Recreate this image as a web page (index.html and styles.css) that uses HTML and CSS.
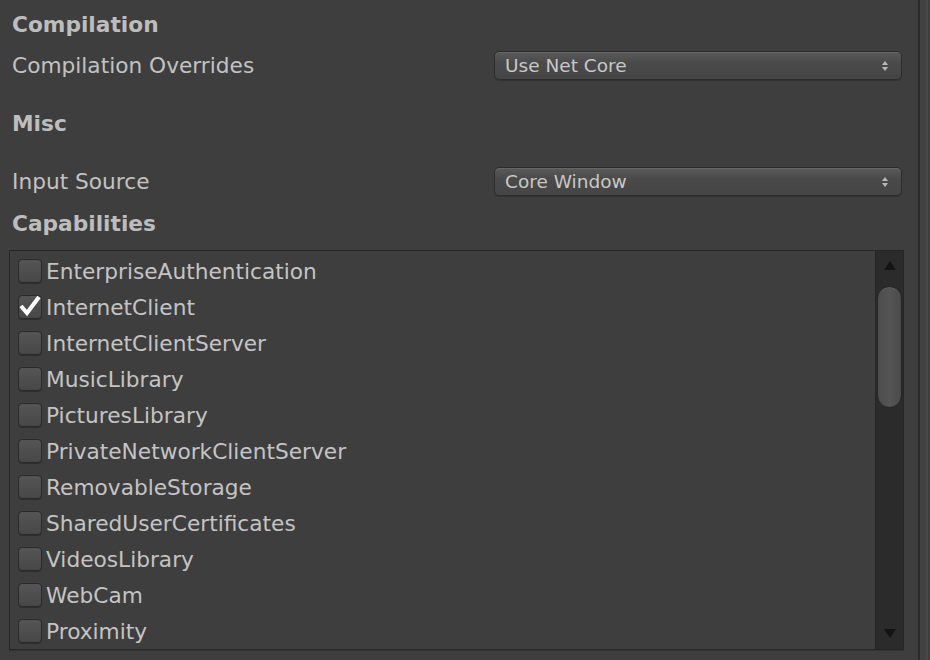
FILE: index.html
```html
<!DOCTYPE html>
<html>
<head>
<meta charset="utf-8">
<link rel="stylesheet" href="styles.css">
</head>
<body>
<div class="panel">
  <div class="content">
    <div class="heading h-compilation">Compilation</div>
    <div class="field f-overrides">
      <span class="label">Compilation Overrides</span>
      <div class="dropdown"><span>Use Net Core</span><svg class="updown" width="8" height="12" viewBox="0 0 8 12"><path d="M4 1 L7 5 L1 5 Z" fill="#b8b8b8"/><path d="M1 7 L7 7 L4 11 Z" fill="#b8b8b8"/></svg></div>
    </div>
    <div class="heading h-misc">Misc</div>
    <div class="field f-input">
      <span class="label">Input Source</span>
      <div class="dropdown"><span>Core Window</span><svg class="updown" width="8" height="12" viewBox="0 0 8 12"><path d="M4 1 L7 5 L1 5 Z" fill="#b8b8b8"/><path d="M1 7 L7 7 L4 11 Z" fill="#b8b8b8"/></svg></div>
    </div>
    <div class="heading h-cap">Capabilities</div>
    <div class="listbox">
      <div class="items">
        <div class="item"><span class="cb"></span><span>EnterpriseAuthentication</span></div>
        <div class="item"><span class="cb"><svg width="24" height="24" viewBox="0 0 24 24"><path d="M3 12 L9 19 L21 3" fill="none" stroke="#ffffff" stroke-width="4" stroke-linejoin="miter"/></svg></span><span>InternetClient</span></div>
        <div class="item"><span class="cb"></span><span>InternetClientServer</span></div>
        <div class="item"><span class="cb"></span><span>MusicLibrary</span></div>
        <div class="item"><span class="cb"></span><span>PicturesLibrary</span></div>
        <div class="item"><span class="cb"></span><span>PrivateNetworkClientServer</span></div>
        <div class="item"><span class="cb"></span><span>RemovableStorage</span></div>
        <div class="item"><span class="cb"></span><span>SharedUserCertificates</span></div>
        <div class="item"><span class="cb"></span><span>VideosLibrary</span></div>
        <div class="item"><span class="cb"></span><span>WebCam</span></div>
        <div class="item"><span class="cb"></span><span>Proximity</span></div>
      </div>
      <div class="scrollbar">
        <svg class="arrow" width="14" height="12" viewBox="0 0 14 12"><path d="M7 1 L13 10 L1 10 Z" fill="#141414"/></svg>
        <div class="track"><div class="thumb"></div></div>
        <svg class="arrow" width="14" height="12" viewBox="0 0 14 12"><path d="M1 2 L13 2 L7 11 Z" fill="#141414"/></svg>
      </div>
    </div>
  </div>
  <div class="edge"><div class="edge-dark"></div><div class="edge-mid"></div><div class="edge-light"></div><div class="edge-end"></div></div>
</div>
</body>
</html>
```
FILE: styles.css
```css
html, body {
  margin: 0;
  padding: 0;
  background: #3e3e3e;
}
body {
  width: 930px;
  height: 660px;
  overflow: hidden;
  font-family: "DejaVu Sans", Verdana, sans-serif;
  color: #c2c2c2;
}
.panel {
  display: flex;
  height: 660px;
}
.content {
  flex: 1;
  padding: 0 0 0 9px;
  display: flex;
  flex-direction: column;
}
.heading {
  font-weight: bold;
  font-size: 21.7px;
  color: #bdbdbd;
  padding-left: 3px;
  line-height: 24px;
  height: 24px;
}
.h-compilation { margin-top: 13px; }
.h-misc { margin-top: 32px; }
.h-cap { margin-top: 16px; }
.field {
  display: flex;
  align-items: center;
  justify-content: space-between;
  padding-left: 3px;
  width: 890px;
  height: 29px;
}
.f-overrides { margin-top: 14px; }
.f-input { margin-top: 31px; }
.label {
  font-size: 21.7px;
  line-height: 26px;
}
.dropdown {
  width: 408px;
  height: 29px;
  box-sizing: border-box;
  border: 1px solid #2c2c2c;
  border-radius: 5px;
  background: linear-gradient(#5a5a5a, #4a4a4a 40%, #454545);
  box-shadow: inset 0 1px 0 #666, 0 1px 0 #333;
  display: flex;
  align-items: center;
  justify-content: space-between;
  padding: 0 12px 0 10px;
  font-size: 18.5px;
  color: #c8c8c8;
}
.updown { display: block; }
.listbox {
  margin-top: 14px;
  width: 895px;
  height: 400px;
  box-sizing: border-box;
  border: 1px solid #262626;
  border-right: none;
  display: flex;
  box-shadow: 0 1px 0 #333;
}
.items {
  flex: 1;
  padding: 2px 0 0 8px;
  display: flex;
  flex-direction: column;
  border-right: 1px solid #262626;
}
.item {
  height: 36px;
  flex: none;
  display: flex;
  align-items: center;
  font-size: 21.7px;
  color: #c4c4c4;
}
.cb {
  width: 24px;
  height: 24px;
  box-sizing: border-box;
  border-radius: 4px;
  border: 1px solid #2a2a2a;
  background: linear-gradient(#555, #474747);
  box-shadow: 0 1px 0 #2e2e2e;
  margin-right: 4px;
  position: relative;
  flex: none;
}
.cb svg {
  position: absolute;
  left: -1px;
  top: -2px;
}
.scrollbar {
  width: 28px;
  background: #2b2b2b;
  display: flex;
  flex-direction: column;
  align-items: center;
  padding: 9px 0 10px;
  box-sizing: border-box;
  border-right: 1px solid #262626;
}
.arrow { display: block; flex: none; }
.track {
  flex: 1;
  width: 100%;
  padding: 14px 1px;
  box-sizing: border-box;
}
.thumb {
  height: 120px;
  border-radius: 13px;
  border: 1px solid #262626;
  background: linear-gradient(90deg, #4c4c4c, #555 50%, #4a4a4a);
  box-shadow: inset 0 1px 0 #5e5e5e;
}
.edge {
  width: 12px;
  display: flex;
}
.edge-dark { width: 2px; background: #2c2c2c; }
.edge-mid { width: 6px; background: #424242; }
.edge-light { width: 2px; background: #4a4a4a; }
.edge-end { width: 2px; background: #3e3e3e; }
```
